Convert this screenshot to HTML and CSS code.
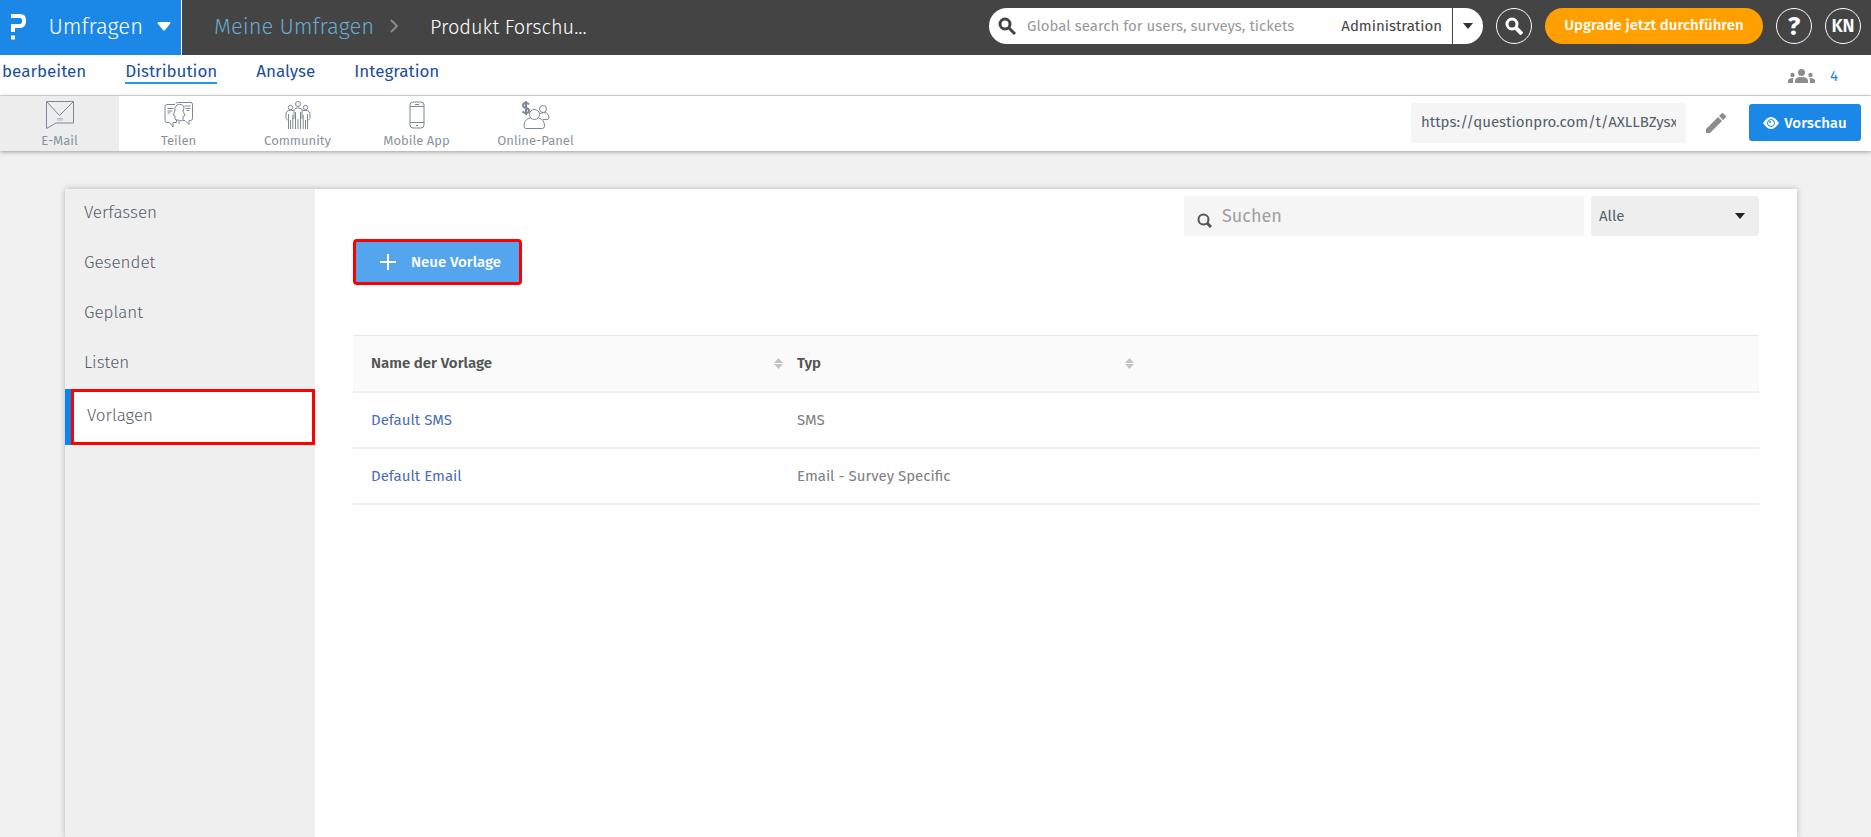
FILE: index.html
```
<!DOCTYPE html>
<html lang="de">
  <head>
    <meta charset="UTF-8" />
    <meta name="viewport" content="width=device-width, initial-scale=1.0" />
    <title>Vorlagen</title>
    <link rel="stylesheet" href="styles.css">
  </head>
  <body>
    <header class="topbar">
      <button class="product" type="button">
        <svg class="logo" width="18" height="29" viewBox="0 0 18 29">
          <path d="M1 4h9q4 0 4 4v1q0 5-4 5H3v6" fill="none" stroke="#fff" stroke-width="4" />
          <path d="M1 23.500h4v4H1z" fill="#fff" />
        </svg>
        <span>Umfragen</span>
        <svg width="14" height="9" viewBox="0 0 14 9"><path d="M1 0h12q1 1 0 2L8 8q-1 1-2 0L1 2q-1-1 0-2z" fill="#fff" /></svg>
      </button>
      <nav class="breadcrumb">
        <a href="#">Meine Umfragen</a>
        <svg width="9" height="14" viewBox="0 0 9 14"><path d="M1 1l6 6-6 6" fill="none" stroke="#8a8a8a" stroke-width="2" /></svg>
        <span>Produkt Forschu...</span>
      </nav>
      <form class="global-search">
        <svg width="18" height="18" viewBox="0 0 18 18"><path d="M11 11l6 6" stroke="#444" stroke-width="3" /><circle cx="7" cy="7" r="5" fill="none" stroke="#444" stroke-width="3" /></svg>
        <input type="text" aria-label="Global search" placeholder="Global search for users, surveys, tickets" />
        <span class="scope">Administration</span>
        <button type="button" aria-label="Administration">
          <svg width="10" height="6" viewBox="0 0 10 6"><path d="M0 0h10L5 6z" fill="#333" /></svg>
        </button>
      </form>
      <button class="circle" type="button" aria-label="Suche">
        <svg width="18" height="18" viewBox="0 0 18 18"><path d="M11 11l6 6" stroke="#fff" stroke-width="4" /><circle cx="7" cy="7" r="5" fill="none" stroke="#fff" stroke-width="3" /></svg>
      </button>
      <button class="upgrade" type="button">Upgrade jetzt durchführen</button>
      <button class="circle help" type="button">?</button>
      <button class="circle" type="button">KN</button>
    </header>

    <nav class="tabs">
      <a href="#">bearbeiten</a>
      <a href="#" class="current">Distribution</a>
      <a href="#">Analyse</a>
      <a href="#">Integration</a>
      <a href="#" class="members">
        <svg width="27" height="14" viewBox="0 0 27 14" fill="#8c8c8c">
          <circle cx="13.500" cy="3.500" r="3.500" />
          <circle cx="4.500" cy="6" r="2.200" />
          <circle cx="22.500" cy="6" r="2.200" />
          <path d="M7 14v-2q0-4 6.500-4t6.500 4v2zM0 14v-2q0-3 5.500-3Q5 10 5 14zM27 14v-2q0-3-5.500-3 .5 1 .5 5z" />
        </svg>
        <span>4</span>
      </a>
    </nav>

    <div class="toolbar">
      <a href="#" class="tool selected">
        <svg width="30" height="30" viewBox="0 0 30 30">
          <path d="M1.500 1.500h27v21.500H11L1.500 28.500zM1.500 1.500L14.500 15.500 28.500 1.500" />
          <path d="M12.500 18.500h5M12.500 20h5" stroke-dasharray="1 1" />
        </svg>
        <span>E-Mail</span>
      </a>
      <a href="#" class="tool">
        <svg width="30" height="30" viewBox="0 0 30 30">
          <path d="M11 4.500H3q-2 0-2 2v14q0 2 2 2h2.500l3.500 4.500v-4.500h3.500v-3" />
          <path d="M12 3.500q0-1 1.500-1h13.500q1.500 0 1.500 2v14q0 2-2 2h-1.500v4l-4-4h-2.500" />
          <path d="M13 5q-3 2-2 6l-2 4 2 1v3q1 2 4 1v4M13 5q5-2 7 2 0 2-1 4l2 4.500-2 1v3q-1 2-3 1M3.500 8.500h6M3.500 11h5M3.500 13h3M20.500 6h6M21.500 8.500h5M22.500 10.500h3" />
        </svg>
        <span>Teilen</span>
      </a>
      <a href="#" class="tool">
        <svg width="30" height="30" viewBox="0 0 30 30">
          <circle cx="15" cy="4" r="2.500" />
          <circle cx="7.500" cy="7.500" r="2.200" />
          <circle cx="22.500" cy="7.500" r="2.200" />
          <path d="M11 19v-7q-1-4 4-4t4 4v7M12.500 12v17M17.500 12v17M15 19v10M10.500 10.500q-7-1-7.500 3v5l2 2M5.500 14v15M7.500 20v9M9.800 15v14M19.500 10.500q7-1 7.500 3v5l-2 2M24.500 14v15M22.500 20v9M20.200 15v14" />
        </svg>
        <span>Community</span>
      </a>
      <a href="#" class="tool">
        <svg width="30" height="30" viewBox="0 0 30 30">
          <rect x="8" y="2" width="14" height="26" rx="3" />
          <path d="M8 6.500h14M8 22.500h14M13 4.500h4M14 25.500h2" />
        </svg>
        <span>Mobile App</span>
      </a>
      <a href="#" class="tool">
        <svg width="30" height="30" viewBox="0 0 30 30">
          <path d="M8 4.500q-1-1.500-3-1.500-3 0-3 2.200T5 8t3 2.800T5 13q-2 0-3.500-1.500M5 1v14" stroke-width="2" />
          <circle cx="13.500" cy="14.500" r="5" />
          <circle cx="22" cy="9" r="3.500" />
          <path d="M9.500 18Q3 19 3 26q0 2.500 2 2.500h16q2.500 0 2.500-2.500 0-7-6-8M19 13.500q8.500-3 9 4-.5 2-2 2h-4" />
        </svg>
        <span>Online-Panel</span>
      </a>
      <input class="survey-url" type="text" aria-label="Umfrage-URL" value="https://questionpro.com/t/AXLLBZysxQ" />
      <button class="edit" type="button" aria-label="URL bearbeiten">
        <svg width="20" height="20" viewBox="0 0 20 20" fill="#8c8c8c"><path d="M0 16L12 4l4 4L4 20H0zM13 3l2.500-2.500q1-1 2 0l2 2q1 1 0 2L17 7z" /></svg>
      </button>
      <button class="preview" type="button">
        <svg width="16" height="12" viewBox="0 0 16 12"><path d="M0 6q8-12 16 0-8 12-16 0z" fill="#fff" /><circle cx="8" cy="6" r="3.500" fill="none" stroke="#1b87e6" /><circle cx="7" cy="5" r="1" fill="#1b87e6" /></svg>
        Vorschau
      </button>
    </div>

    <div class="page">
      <aside class="sidebar">
        <a href="#">Verfassen</a>
        <a href="#">Gesendet</a>
        <a href="#">Geplant</a>
        <a href="#">Listen</a>
        <a href="#" class="active"><span>Vorlagen</span></a>
      </aside>
      <main class="content">
        <form class="filters">
          <label class="search">
            <svg width="15" height="15" viewBox="0 0 15 15" fill="none" stroke="#555"><circle cx="6.500" cy="6.500" r="5" stroke-width="2" /><path d="M10 10l4 4" stroke-width="3" /></svg>
            <input type="text" aria-label="Suchen" placeholder="Suchen" />
          </label>
          <div class="select">
            <select aria-label="Typ">
              <option>Alle</option>
            </select>
            <svg width="10" height="6" viewBox="0 0 10 6"><path d="M0 0h10L5 6z" fill="#222" /></svg>
          </div>
        </form>
        <button class="new-template" type="button">
          <svg width="16" height="16" viewBox="0 0 16 16"><path d="M8 0v16M0 8h16" stroke="#fff" stroke-width="2" /></svg>
          Neue Vorlage
        </button>
        <table class="templates">
          <thead>
            <tr>
              <th class="col-name">
                <div class="sortable">Name der Vorlage
                  <svg width="9" height="11" viewBox="0 0 9 11" fill="#c4c4c4"><path d="M0 5L4.500 0 9 5zM0 6h9L4.500 11z" /></svg>
                </div>
              </th>
              <th class="col-type">
                <div class="sortable">Typ
                  <svg width="9" height="11" viewBox="0 0 9 11" fill="#c4c4c4"><path d="M0 5L4.500 0 9 5zM0 6h9L4.500 11z" /></svg>
                </div>
              </th>
              <th></th>
            </tr>
          </thead>
          <tbody>
            <tr>
              <td><a href="#">Default SMS</a></td>
              <td>SMS</td>
              <td></td>
            </tr>
            <tr>
              <td><a href="#">Default Email</a></td>
              <td>Email - Survey Specific</td>
              <td></td>
            </tr>
          </tbody>
        </table>
      </main>
    </div>
  </body>
</html>
```
FILE: styles.css
```
* {
  padding: 0;
  margin: 0;
  box-sizing: border-box;
}

body {
  font-family: "Fira Sans", "Open Sans", "Noto Sans", sans-serif;
  font-size: 15px;
  color: #545e6b;
  background-color: #f1f1f1;
  display: flex;
  flex-direction: column;
  height: 100vh;
  overflow: hidden;
}

a {
  color: inherit;
  text-decoration: none;
}

button,
input,
select {
  font: inherit;
  color: inherit;
  border: none;
  background: none;
  outline: none;
}

svg {
  display: block;
  flex-shrink: 0;
}

/* top bar */
.topbar {
  display: flex;
  align-items: center;
  height: 55px;
  flex-shrink: 0;
  padding: 0 10px 3px 0;
  background-color: #444;
}

.product {
  display: flex;
  align-items: center;
  gap: 14px;
  width: 182px;
  height: 55px;
  margin-bottom: -3px;
  padding: 0 10px 3px;
  color: #fff;
  font-size: 22px;
  font-weight: 300;
  border-right: 1px solid #fff;
  background-color: #1b87e6;
}

.product span {
  flex: 1;
  text-align: right;
}

.breadcrumb {
  display: flex;
  align-items: center;
  gap: 16px;
  margin-left: 32px;
  font-size: 22px;
  font-weight: 300;
  color: #68abd0;
}

.breadcrumb span {
  margin-left: 15px;
  padding-top: 2px;
  color: #fff;
  font-size: 20px;
}

.global-search {
  display: flex;
  align-items: center;
  width: 494px;
  height: 36px;
  margin-left: auto;
  padding-left: 9px;
  border-radius: 18px;
  background-color: #fff;
}

.global-search input {
  flex: 1;
  min-width: 0;
  margin-left: 11px;
}

.global-search input::placeholder {
  color: #999;
}

.scope {
  color: #444;
  margin-right: 10px;
}

.global-search button {
  display: flex;
  align-items: center;
  width: 31px;
  height: 36px;
  padding-left: 10px;
  border-left: 1px solid #444;
}

.circle {
  display: flex;
  align-items: center;
  justify-content: center;
  width: 36px;
  height: 36px;
  margin-left: 13px;
  color: #fff;
  font-size: 18px;
  font-weight: 600;
  border: 1px solid #fff;
  border-radius: 50%;
}

.help {
  font-size: 26px;
  font-weight: 700;
}

.upgrade {
  width: 218px;
  height: 36px;
  margin-left: 13px;
  color: #fff;
  font-weight: 500;
  padding-bottom: 3px;
  border-radius: 18px;
  background-color: #ffa000;
}

/* section tabs */
.tabs {
  display: flex;
  align-items: center;
  gap: 39px;
  height: 41px;
  flex-shrink: 0;
  padding: 0 33px 4px 2px;
  font-size: 17px;
  line-height: 20px;
  color: #1b4f9c;
  border-bottom: 1px solid #ddd;
  background-color: #fff;
}

.tabs a {
  border-bottom: 2px solid transparent;
}

.tabs .current {
  border-color: #1b9be0;
}

.members {
  display: flex;
  align-items: center;
  gap: 15px;
  margin-left: auto;
  padding-top: 8px;
  color: #1b87e6;
  font-size: 15px;
}

/* distribution channels */
.toolbar {
  display: flex;
  align-items: center;
  height: 55px;
  flex-shrink: 0;
  padding-right: 10px;
  padding-bottom: 2px;
  background-color: #fff;
  box-shadow: 0 1px 4px rgba(0, 0, 0, 0.35);
}

.tool {
  display: flex;
  flex-direction: column;
  align-items: center;
  width: 119px;
  height: 55px;
  margin-bottom: -2px;
  padding-top: 4px;
  font-size: 13px;
  line-height: 22px;
  color: #8a94a0;
}

.tool svg {
  fill: none;
  stroke: #7d8896;
}

.selected {
  background-color: #ededed;
}

.survey-url {
  width: 275px;
  height: 40px;
  margin-left: auto;
  padding: 0 10px 2px;
  background-color: #f5f5f5;
}

.edit {
  margin: 0 23px 0 20px;
}

.preview {
  display: flex;
  align-items: center;
  justify-content: center;
  gap: 5px;
  width: 112px;
  height: 37px;
  color: #fff;
  font-weight: 500;
  border-radius: 3px;
  background-color: #1b87e6;
}

/* card with side menu and template list */
.page {
  display: flex;
  flex: 1;
  margin: 38px 74px 0 65px;
  background-color: #fff;
  box-shadow: 0 0 6px rgba(0, 0, 0, 0.25);
}

.sidebar {
  width: 250px;
  flex-shrink: 0;
  font-size: 17px;
  font-weight: 300;
  background-color: #efefef;
}

.sidebar a {
  display: block;
  height: 50px;
  padding-left: 19px;
  line-height: 48px;
}

.sidebar .active {
  height: 56px;
  padding-left: 6px;
  background-color: #0a87ec;
}

.active span {
  display: block;
  height: 56px;
  padding-left: 13px;
  border: 3px solid #f00;
  background-color: #fff;
}

.content {
  flex: 1;
  padding: 7px 38px;
}

.filters {
  display: flex;
  justify-content: flex-end;
  gap: 7px;
}

.search {
  display: flex;
  align-items: center;
  gap: 10px;
  width: 400px;
  height: 40px;
  padding-left: 13px;
  background-color: #f5f5f5;
}

.search svg {
  margin-top: 8px;
}

.search input {
  flex: 1;
  font-size: 18px;
}

.search input::placeholder {
  color: #a0a0a0;
}

.select {
  display: grid;
  align-items: center;
  width: 168px;
  height: 40px;
  border-radius: 3px;
  background-color: #eee;
}

.select select,
.select svg {
  grid-area: 1 / 1;
}

.select select {
  width: 100%;
  height: 40px;
  padding-left: 8px;
  appearance: none;
}

.select svg {
  justify-self: end;
  margin-right: 14px;
  pointer-events: none;
}

.new-template {
  display: flex;
  align-items: center;
  gap: 15px;
  height: 46px;
  margin: 3px 0 50px;
  padding: 0 18px 0 24px;
  color: #fff;
  font-weight: 500;
  border: 3px solid #f00;
  border-radius: 4px;
  background-color: #55a4ee;
}

.templates {
  width: 100%;
  table-layout: fixed;
  border-collapse: collapse;
  border-top: 1px solid #e8e8e8;
}

.templates tr {
  height: 56px;
  border-bottom: 2px solid #f1f1f1;
}

.templates th,
.templates td {
  text-align: left;
}

.templates th {
  font-weight: 600;
}

.templates th:first-child,
.templates td:first-child {
  padding-left: 18px;
}

.templates thead tr {
  color: #545454;
  background-color: #fafafa;
}

.templates td {
  color: #808080;
}

.templates td a {
  color: #4a6fb3;
}

.col-name {
  width: 444px;
}

.col-type {
  width: 351px;
}

.sortable {
  display: flex;
  align-items: center;
  justify-content: space-between;
  margin-right: 14px;
}
```
